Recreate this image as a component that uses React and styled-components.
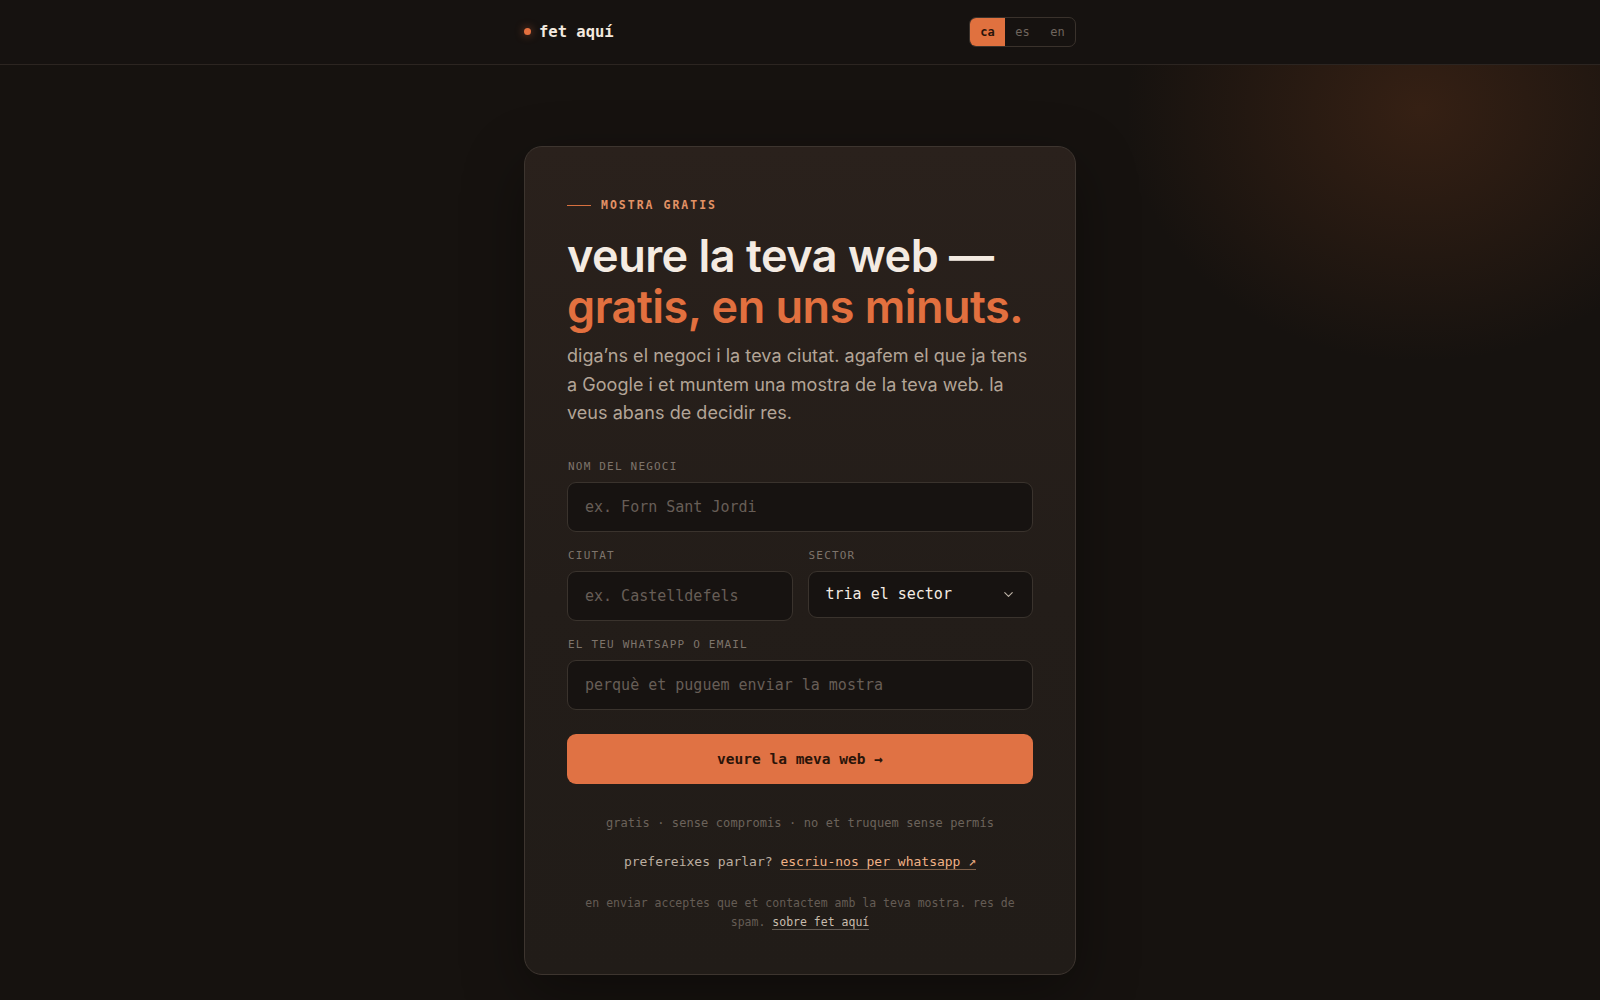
import React from 'react';
import styled, { createGlobalStyle } from 'styled-components';

const GlobalStyle = createGlobalStyle`
  * { box-sizing: border-box; }
  html, body {
    margin: 0;
    padding: 0;
    background: #16120f;
  }
  body {
    font-family: "Inter", "Noto Sans", sans-serif;
    color: #f3e9df;
    min-height: 1000px;
  }
`;

const mono = `"DejaVu Sans Mono", "Liberation Mono", monospace`;

const Page = styled.div`
  min-height: 1000px;
  background:
    radial-gradient(ellipse 420px 360px at 1420px 110px, rgba(120, 62, 30, 0.32), rgba(120, 62, 30, 0) 70%),
    #16120f;
`;

const Header = styled.header`
  height: 65px;
  border-bottom: 1px solid #2c2521;
  background: #161210;
`;

const HeaderInner = styled.div`
  width: 552px;
  height: 100%;
  margin: 0 auto;
  display: flex;
  align-items: center;
  justify-content: space-between;
`;

const Logo = styled.a`
  display: flex;
  align-items: center;
  gap: 8px;
  font-family: ${mono};
  font-weight: 700;
  font-size: 15.5px;
  color: #f3e9df;
  text-decoration: none;
  margin-top: -1px;
`;

const Dot = styled.span`
  width: 7px;
  height: 7px;
  border-radius: 50%;
  background: #e4703f;
  box-shadow: 0 0 8px rgba(228, 112, 63, 0.6);
`;

const LangSwitch = styled.div`
  display: flex;
  border: 1px solid #3a322c;
  border-radius: 7px;
  overflow: hidden;
  margin-top: -1px;
`;

const LangButton = styled.button`
  border: 0;
  width: 35px;
  height: 28px;
  font-family: ${mono};
  font-size: 12px;
  font-weight: ${(p) => (p.$active ? 700 : 400)};
  background: ${(p) => (p.$active ? '#e0713f' : 'transparent')};
  color: ${(p) => (p.$active ? '#2a140a' : '#6f655d')};
  cursor: pointer;
`;

const Main = styled.main`
  display: flex;
  justify-content: center;
  padding: 81px 0 40px;
`;

const Card = styled.section`
  width: 552px;
  border: 1px solid #3d352f;
  border-radius: 18px;
  padding: 50px 42px 42px;
  background: linear-gradient(180deg, #2a211c 0%, #231d19 55%, #211c18 100%);
  box-shadow: 0 20px 60px rgba(0, 0, 0, 0.35);
`;

const Eyebrow = styled.div`
  display: flex;
  align-items: center;
  gap: 10px;
  font-family: ${mono};
  font-size: 11.5px;
  font-weight: 700;
  letter-spacing: 2px;
  color: #e39265;
  line-height: 16px;

  &::before {
    content: '';
    width: 24px;
    height: 1px;
    background: #d7703f;
  }
`;

const Title = styled.h1`
  margin: 17px 0 0;
  font-family: "Inter", sans-serif;
  font-weight: 600;
  font-size: 45px;
  line-height: 51px;
  letter-spacing: -0.5px;
  color: #f4ebe2;
`;

const Accent = styled.span`
  display: block;
  color: #e2703f;
`;

const Lead = styled.p`
  margin: 10px 0 0;
  font-family: "Inter", sans-serif;
  font-size: 18px;
  line-height: 28.5px;
  color: #b3a597;
  letter-spacing: 0.05px;
`;

const Form = styled.form`
  margin-top: 31px;
  display: flex;
  flex-direction: column;
  gap: 16px;
`;

const Row = styled.div`
  display: grid;
  grid-template-columns: 1fr 1fr;
  gap: 15px;
  align-items: start;
`;

const Field = styled.label`
  display: flex;
  flex-direction: column;
  gap: 8px;
`;

const Label = styled.span`
  padding-left: 1px;
  font-family: ${mono};
  font-size: 11px;
  line-height: 15px;
  letter-spacing: 1.2px;
  color: #7e746b;
  text-transform: uppercase;
`;

const Input = styled.input`
  height: 50px;
  width: 100%;
  padding: 0 17px;
  border: 1px solid #3a332d;
  border-radius: 9px;
  background: #171311;
  font-family: ${mono};
  font-size: 15px;
  color: #f3e9df;
  outline: none;

  &::placeholder {
    color: #675e57;
  }
`;

const SelectBox = styled.div`
  height: 47px;
  display: flex;
  align-items: center;
  justify-content: space-between;
  padding: 0 16px 0 17px;
  border: 1px solid #3a332d;
  border-radius: 9px;
  background: #171311;
  font-family: ${mono};
  font-size: 15px;
  color: #f5ece3;
`;

const Submit = styled.button`
  margin-top: 8px;
  height: 50px;
  border: 0;
  border-radius: 9px;
  background: #e07244;
  color: #2a1409;
  font-family: ${mono};
  font-weight: 700;
  font-size: 14.5px;
  cursor: pointer;
`;

const Note = styled.p`
  margin: ${(p) => p.$mt || '0'} 0 0;
  text-align: center;
  font-family: ${mono};
  font-size: ${(p) => p.$size || '12px'};
  line-height: ${(p) => p.$lh || '18px'};
  letter-spacing: ${(p) => p.$ls || '0'};
  color: ${(p) => p.$color || '#6c635b'};
`;

const Link = styled.a`
  display: inline-block;
  color: ${(p) => p.$color || '#f0b186'};
  text-decoration: none;
  border-bottom: 1px solid ${(p) => p.$line || 'rgba(240, 177, 134, 0.45)'};
  line-height: 1.2;
`;

const Chevron = () => (
  <svg width="15" height="15" viewBox="0 0 24 24" fill="none" stroke="#bdb2a7" strokeWidth="1.8" strokeLinecap="round" strokeLinejoin="round">
    <path d="M6 9l6 6 6-6" />
  </svg>
);

export default function App() {
  return (
    <>
      <GlobalStyle />
      <Page>
        <Header>
          <HeaderInner>
            <Logo href="#">
              <Dot />
              fet aquí
            </Logo>
            <LangSwitch>
              <LangButton $active>ca</LangButton>
              <LangButton>es</LangButton>
              <LangButton>en</LangButton>
            </LangSwitch>
          </HeaderInner>
        </Header>
        <Main>
          <Card>
            <Eyebrow>MOSTRA GRATIS</Eyebrow>
            <Title>
              veure la teva web —
              <Accent>gratis, en uns minuts.</Accent>
            </Title>
            <Lead>
              diga’ns el negoci i la teva ciutat. agafem el que ja tens a Google i et muntem una mostra de la teva web. la veus abans de decidir res.
            </Lead>
            <Form onSubmit={(e) => e.preventDefault()}>
              <Field>
                <Label>Nom del negoci</Label>
                <Input placeholder="ex. Forn Sant Jordi" />
              </Field>
              <Row>
                <Field>
                  <Label>Ciutat</Label>
                  <Input placeholder="ex. Castelldefels" />
                </Field>
                <Field>
                  <Label>Sector</Label>
                  <SelectBox>
                    tria el sector
                    <Chevron />
                  </SelectBox>
                </Field>
              </Row>
              <Field>
                <Label>El teu whatsapp o email</Label>
                <Input placeholder="perquè et puguem enviar la mostra" />
              </Field>
              <Submit type="submit">veure la meva web →</Submit>
            </Form>
            <Note $mt="30px" $ls="0.1px">gratis · sense compromis · no et truquem sense permís</Note>
            <Note $mt="20px" $size="13px" $lh="20px" $color="#bcaea0">
              prefereixes parlar? <Link href="#">escriu-nos per whatsapp ↗</Link>
            </Note>
            <Note $mt="22px" $size="11.5px" $lh="19px" $color="#655c55">
              en enviar acceptes que et contactem amb la teva mostra. res de spam.{' '}
              <Link href="#" $color="#c9bcae" $line="rgba(201, 188, 174, 0.4)">sobre fet aquí</Link>
            </Note>
          </Card>
        </Main>
      </Page>
    </>
  );
}
